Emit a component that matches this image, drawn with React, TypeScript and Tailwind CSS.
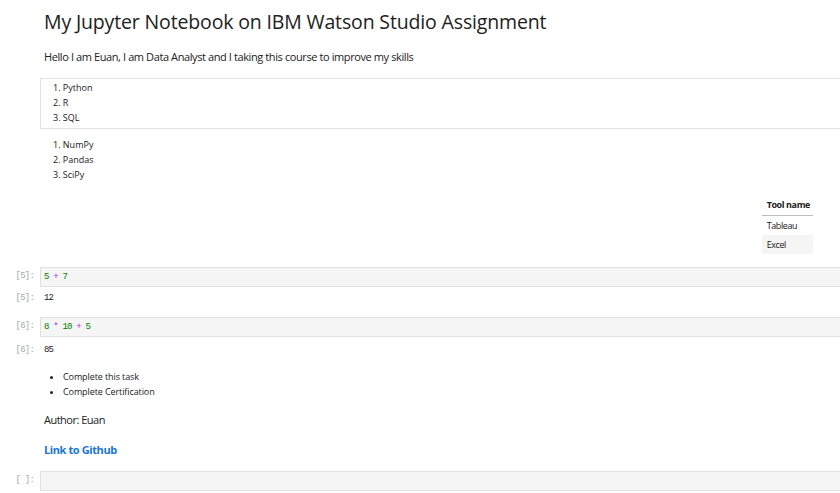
import React from 'react';

const sans = "font-['Open_Sans',sans-serif]";
const mono = "font-['Liberation_Mono',monospace]";

function Prompt({ text }: { text: string }) {
  return (
    <div className={`w-[40px] shrink-0 pr-[6px] text-right text-[9px] tracking-[-0.8px] text-[#a8a8a8] ${mono}`}>{text}</div>
  );
}

function CodeCell({ prompt, children }: { prompt: string; children?: React.ReactNode }) {
  return (
    <div className="flex items-center">
      <Prompt text={prompt} />
      <div className={`h-[20px] w-[820px] shrink-0 border border-[#e0e0e0] bg-[#f5f5f5] pl-[3px] text-[9px] leading-[18px] tracking-[-0.8px] ${mono}`}>
        {children}
      </div>
    </div>
  );
}

function Output({ prompt, value }: { prompt: string; value: string }) {
  return (
    <div className="flex h-[16px] items-center">
      <Prompt text={prompt} />
      <div className={`pl-[4px] text-[9px] tracking-[-0.8px] text-[#212121] ${mono}`}>{value}</div>
    </div>
  );
}

const num = 'text-[#008000]';
const op = 'text-[#aa22ff]';

export default function App() {
  return (
    <div className={`h-[493px] w-[840px] overflow-hidden bg-white text-[#212121] ${sans}`}>
      <h1 className="mt-[10px] pl-[44px] text-[19.5px] font-medium leading-[24px] tracking-[-0.15px]">
        My Jupyter Notebook on IBM Watson Studio Assignment
      </h1>
      <p className="mt-[15px] pl-[44px] text-[11px] leading-[16px] tracking-[-0.4px]">
        Hello I am Euan, I am Data Analyst and I taking this course to improve my skills
      </p>

      <div className="ml-[40px] mt-[13px] h-[51px] w-[820px] border border-[#e0e0e0] pt-[1px] text-[9px] leading-[15px]">
        <ol className="pl-[12px]">
          <li>1. Python</li>
          <li>2. R</li>
          <li>3. SQL</li>
        </ol>
      </div>

      <ol className="mt-[8px] pl-[53px] text-[9px] leading-[15px]">
        <li>1. NumPy</li>
        <li>2. Pandas</li>
        <li>3. SciPy</li>
      </ol>

      <div className="mt-[13px] flex justify-end pr-[27px]">
        <table className="w-[51px] border-collapse text-[9px] tracking-[-0.4px]">
          <thead>
            <tr className="h-[20px] border-b border-[#bdbdbd]">
              <th className="whitespace-nowrap pl-[5px] pr-[3px] text-left font-bold">Tool name</th>
            </tr>
          </thead>
          <tbody>
            <tr className="h-[20px]">
              <td className="pl-[5px] pr-[3px]">Tableau</td>
            </tr>
            <tr className="h-[19px] bg-[#f5f5f5]">
              <td className="pl-[5px] pr-[3px]">Excel</td>
            </tr>
          </tbody>
        </table>
      </div>

      <div className="mt-[13px]">
        <CodeCell prompt="[5]:">
          <span className={num}>5</span> <span className={op}>+</span> <span className={num}>7</span>
        </CodeCell>
      </div>
      <div className="mt-[4px]">
        <Output prompt="[5]:" value="12" />
      </div>
      <div className="mt-[10px]">
        <CodeCell prompt="[6]:">
          <span className={num}>8</span> <span className={op}>*</span> <span className={num}>10</span>{' '}
          <span className={op}>+</span> <span className={num}>5</span>
        </CodeCell>
      </div>
      <div className="mt-[6px]">
        <Output prompt="[6]:" value="85" />
      </div>

      <ul className="mt-[10px] list-disc pl-[63px] text-[9px] leading-[15px] tracking-[-0.1px] marker:text-[#212121]">
        <li>Complete this task</li>
        <li>Complete Certification</li>
      </ul>

      <p className="mt-[13px] pl-[44px] text-[11px] leading-[16px] tracking-[-0.5px]">Author: Euan</p>

      <p className="mt-[14px] pl-[44px] text-[11px] font-bold leading-[16px] tracking-[-0.4px] text-[#1976d2]">Link to Github</p>

      <div className="mt-[13px]">
        <CodeCell prompt="[ ]:" />
      </div>
    </div>
  );
}
